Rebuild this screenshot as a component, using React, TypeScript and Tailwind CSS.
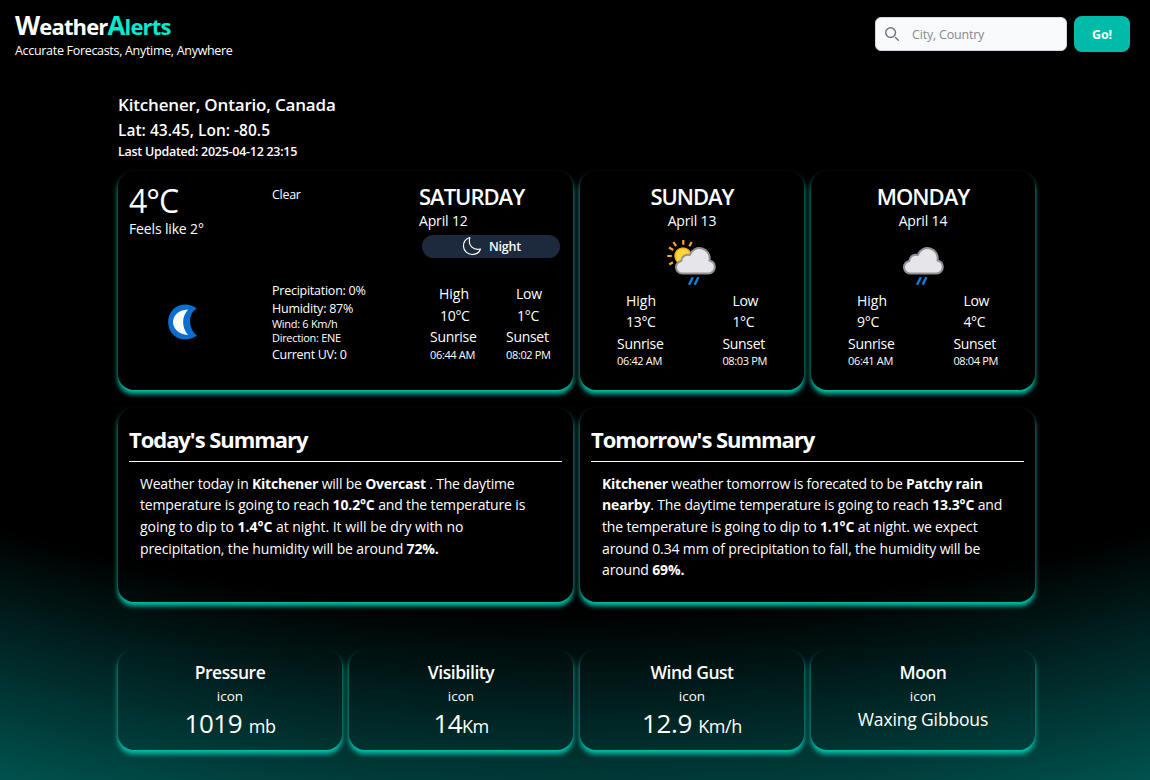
import React, { ReactNode } from 'react';

const cardCls = 'rounded-[16px] shadow-[0_4px_5px_-0.5px_#00c4ae]';

function Line({ children, cls = '' }: { children: ReactNode; cls?: string }) {
  return <div className={'whitespace-nowrap ' + cls}>{children}</div>;
}

function MoonCrescent() {
  return (
    <svg width="32" height="38" viewBox="0 0 32 38" className="block">
      <path d="M30 5.500C22 -.300 12 .500 6 6.500C-.500 13-.500 25 6 31.500C12 37.500 22 38.300 30 32.500C22 27 19.500 11 30 5.500Z" fill="#0b6fd0" />
      <path d="M21 6.500C11 7 6 13 6 19C6 25 11 31.500 21 32C14.500 24 14.500 14 21 6.500Z" fill="#fff" />
    </svg>
  );
}

function RainCloud({ sun }: { sun?: boolean }) {
  return (
    <svg width="64" height="64" viewBox="0 0 64 64" className="block">
      {sun && (
        <g>
          <path
            stroke="#f9a825"
            strokeWidth="2.200"
            d="M23.300 9v4.700M13.500 11l2.500 4.200M31.700 11l-2.400 4.200M9 16.500l4.200 2.500M7.300 25h4.500M9.300 33.500l3.600-2.300"
          />
          <circle cx="23" cy="25" r="8" fill="#fdd835" stroke="#f9a825" strokeWidth="1.500" />
        </g>
      )}
      <path
        d="M22.500 42.500a6.300 6.300 0 0 1-1.300-12.500c.4-4.500 4.500-7 8.500-6a10.300 10.300 0 0 1 19.800 5.500c3.500.8 5.300 3.500 5.300 6.500a6.400 6.400 0 0 1-6.300 6.500Z"
        fill="#e6e6ea"
        stroke="#929296"
        strokeWidth="2"
      />
      <path d="M32.800 46.300l-3.800 7.400M38.400 46.300l-3.800 7.400" stroke="#0b7fdc" strokeWidth="2.400" />
    </svg>
  );
}

type Times = { hi: string; lo: string; rise: string; set: string };

function Forecast({ day, date, sun, hi, lo, rise, set }: Times & { day: string; date: string; sun?: boolean }) {
  return (
    <section className={'flex flex-col items-center pt-[10px] ' + cardCls}>
      <Line cls="text-[22px] leading-[31px] font-semibold tracking-[-1.02px]">{day}</Line>
      <Line cls="text-[14px] leading-[18px] tracking-[-0.15px]">{date}</Line>
      <div className={sun ? 'pt-px' : 'pt-px pr-[7px]'}>
        <RainCloud sun={sun} />
      </div>
      <div className="-mt-[5px] flex w-full justify-between px-[37px]">
        <div>
          <Line cls="pl-[9px] text-[14px] leading-[22px]">High</Line>
          <Line cls="pl-[9px] text-[14px] leading-[20px] tracking-[-0.3px]">{hi}</Line>
          <Line cls="mt-px text-[14px] leading-[22px] tracking-[-0.3px]">Sunrise</Line>
          <Line cls="text-[11px] leading-[12px] tracking-[-0.35px]">{rise}</Line>
        </div>
        <div>
          <Line cls="pl-[10px] text-[14px] leading-[22px] tracking-[-0.3px]">Low</Line>
          <Line cls="pl-[10px] text-[14px] leading-[20px] tracking-[-0.3px]">{lo}</Line>
          <Line cls="mt-px text-[14px] leading-[22px] tracking-[-0.3px]">Sunset</Line>
          <Line cls="text-[11px] leading-[12px] tracking-[-0.35px]">{set}</Line>
        </div>
      </div>
    </section>
  );
}

function Today() {
  return (
    <section className={'col-span-2 grid grid-cols-[143px_147px_1fr] pl-[11px] ' + cardCls}>
      <div>
        <Line cls="mt-[10px] text-[32px] leading-[40px] tracking-[-1px]">4°C</Line>
        <Line cls="-mt-px text-[14px] leading-[17px] tracking-[-0.15px]">Feels like 2°</Line>
        <div className="mt-[66px] ml-[38px]">
          <MoonCrescent />
        </div>
      </div>
      <div className="pt-[15px] text-[12.5px] leading-[18px] tracking-[-0.3px]">
        <Line>Clear</Line>
        <Line cls="mt-[78px] tracking-[-0.25px]">Precipitation: 0%</Line>
        <Line cls="tracking-[-0.25px]">Humidity: 87%</Line>
        <Line cls="-mt-px text-[11px] leading-[14px]">Wind: 6 Km/h</Line>
        <Line cls="text-[11px] leading-[14px]">Direction: ENE</Line>
        <Line cls="mt-px">Current UV: 0</Line>
      </div>
      <div className="pt-[10px]">
        <Line cls="text-[22px] leading-[31px] font-semibold tracking-[-1px]">SATURDAY</Line>
        <Line cls="text-[14px] leading-[18px] tracking-[-0.15px]">April 12</Line>
        <div className="mt-[5px] ml-[3px] flex h-[23px] w-[138px] items-center justify-center gap-[7px] rounded-full bg-slate-800 pl-[1px]">
          <svg width="20" height="20" viewBox="0 0 20 20" fill="none" stroke="#fff" strokeWidth="1.200" strokeLinejoin="round" className="-mt-[2px]">
            <path d="M7.800 1.500C3.500 3 1.300 6.500 1.500 10.500C1.800 15 5.500 18.500 10 18.500C14 18.500 17.300 16.500 18.500 13C12 14.800 5.500 10 7.800 1.500Z" />
          </svg>
          <Line cls="pt-px text-[12.5px] font-semibold tracking-[-0.25px]">Night</Line>
        </div>
        <div className="mt-[25px] flex gap-[30px] pl-[11px]">
          <div className="w-[46px]">
            <Line cls="pl-[9px] text-[14px] leading-[22px]">High</Line>
            <Line cls="pl-[10px] text-[14px] leading-[22px] tracking-[-0.3px]">10°C</Line>
            <Line cls="-mt-px text-[14px] leading-[21px] tracking-[-0.3px]">Sunrise</Line>
            <Line cls="mt-px text-[11px] leading-[14px] tracking-[-0.35px]">06:44 AM</Line>
          </div>
          <div>
            <Line cls="pl-[10px] text-[14px] leading-[22px] tracking-[-0.3px]">Low</Line>
            <Line cls="pl-[11px] text-[14px] leading-[22px] tracking-[-0.3px]">1°C</Line>
            <Line cls="-mt-px text-[14px] leading-[21px] tracking-[-0.3px]">Sunset</Line>
            <Line cls="mt-px text-[11px] leading-[14px] tracking-[-0.35px]">08:02 PM</Line>
          </div>
        </div>
      </div>
    </section>
  );
}

function Summary({ title, children }: { title: string; children: ReactNode }) {
  return (
    <section className={'col-span-2 px-[11px] pt-[15px] ' + cardCls}>
      <h2 className="h-[39px] border-b border-white text-[22px] leading-[33px] font-bold tracking-[-1.05px]">{title}</h2>
      <div className="pt-[10.5px] pl-[11px] text-[14px] leading-[21.7px] tracking-[-0.15px]">{children}</div>
    </section>
  );
}

function Stat({ title, children }: { title: string; children: ReactNode }) {
  return (
    <section className={'flex h-[100px] flex-col items-center pt-[9px] ' + cardCls}>
      <Line cls="text-[17.5px] leading-[26px] font-semibold tracking-[-0.45px]">{title}</Line>
      <Line cls="mt-px text-[13.5px] leading-[20px]">icon</Line>
      {children}
    </section>
  );
}

export default function App() {
  return (
    <div className="h-[780px] overflow-hidden bg-black bg-[radial-gradient(circle_at_575px_-1372px,#000_1984px,#00524f_2227px)] font-['Open_Sans',sans-serif] text-white">
      <header className="flex h-[92px] justify-between pt-[11px] pr-5 pl-[15px]">
        <div>
          <Line cls="text-[22px] leading-[28px] font-bold tracking-[-0.85px]">
            <span className="text-[26px]">W</span>eather
            <span className="text-[#00ebd0]">
              <span className="text-[26px]">A</span>lerts
            </span>
          </Line>
          <Line cls="mt-[2px] text-[12.5px] leading-[18px] tracking-[-0.31px]">Accurate Forecasts, Anytime, Anywhere</Line>
        </div>
        <div className="flex h-[36px] items-center gap-[7px] pt-[10px]">
          <div className="flex h-[34px] w-[192px] shrink-0 items-center rounded-md border border-gray-300 bg-gray-50 pl-[9px]">
            <svg width="14" height="14" viewBox="0 0 20 20" fill="none" stroke="#6b7280" strokeWidth="2" strokeLinecap="round" strokeLinejoin="round">
              <path d="m19 19-4-4m0-7A7 7 0 1 1 1 8a7 7 0 0 1 14 0Z" />
            </svg>
            <input
              placeholder="City, Country"
              className="mt-[2px] ml-[13px] w-[140px] bg-transparent text-[12.5px] tracking-[-0.2px] text-gray-900 outline-none placeholder:text-[#848a94]"
            />
          </div>
          <button className="h-[36px] w-[56px] shrink-0 rounded-lg bg-[#00bba7] pt-[2px] text-[12.5px] font-bold tracking-[-0.2px]">Go!</button>
        </div>
      </header>
      <main className="ml-[118px] w-[917px]">
        <Line cls="text-[17px] leading-[25px] font-semibold tracking-[-0.18px]">Kitchener, Ontario, Canada</Line>
        <Line cls="text-[15.5px] leading-[26px] font-semibold tracking-[0.02px]">Lat: 43.45, Lon: -80.5</Line>
        <Line cls="text-[12.5px] leading-[17px] font-semibold tracking-[-0.28px]">Last Updated: 2025-04-12 23:15</Line>
        <div className="mt-[11px] grid grid-cols-4 grid-rows-[219px_194px] gap-x-[7px] gap-y-[18px]">
          <Today />
          <Forecast day="SUNDAY" date="April 13" sun hi="13°C" lo="1°C" rise="06:42 AM" set="08:03 PM" />
          <Forecast day="MONDAY" date="April 14" hi="9°C" lo="4°C" rise="06:41 AM" set="08:04 PM" />
          <Summary title="Today's Summary">
            <Line cls="tracking-[-0.21px]">Weather today in <b>Kitchener</b> will be <b>Overcast</b> . The daytime</Line>
            <Line>temperature is going to reach <b>10.2°C</b> and the temperature is</Line>
            <Line cls="tracking-[-0.02px]">going to dip to <b>1.4°C</b> at night. It will be dry with no</Line>
            <Line>precipitation, the humidity will be around <b>72%.</b></Line>
          </Summary>
          <Summary title="Tomorrow's Summary">
            <Line cls="tracking-[-0.25px]"><b>Kitchener</b> weather tomorrow is forecated to be <b>Patchy rain</b></Line>
            <Line><b>nearby</b>. The daytime temperature is going to reach <b>13.3°C</b> and</Line>
            <Line>the temperature is going to dip to <b>1.1°C</b> at night. we expect</Line>
            <Line>around 0.34 mm of precipitation to fall, the humidity will be</Line>
            <Line>around <b>69%.</b></Line>
          </Summary>
        </div>
        <div className="mt-[48px] grid grid-cols-4 gap-[7px]">
          <Stat title="Pressure">
            <Line cls="text-[26px] leading-[34px] tracking-[-0.4px]">1019 <span className="text-[18px]">mb</span></Line>
          </Stat>
          <Stat title="Visibility">
            <Line cls="text-[26px] leading-[34px] tracking-[-0.6px]">14<span className="text-[18px]">Km</span></Line>
          </Stat>
          <Stat title="Wind Gust">
            <Line cls="text-[26px] leading-[34px] tracking-[-0.4px]">12.9 <span className="text-[18px]">Km/h</span></Line>
          </Stat>
          <Stat title="Moon">
            <Line cls="text-[17.5px] leading-[26px] tracking-[-0.15px]">Waxing Gibbous</Line>
          </Stat>
        </div>
      </main>
    </div>
  );
}
